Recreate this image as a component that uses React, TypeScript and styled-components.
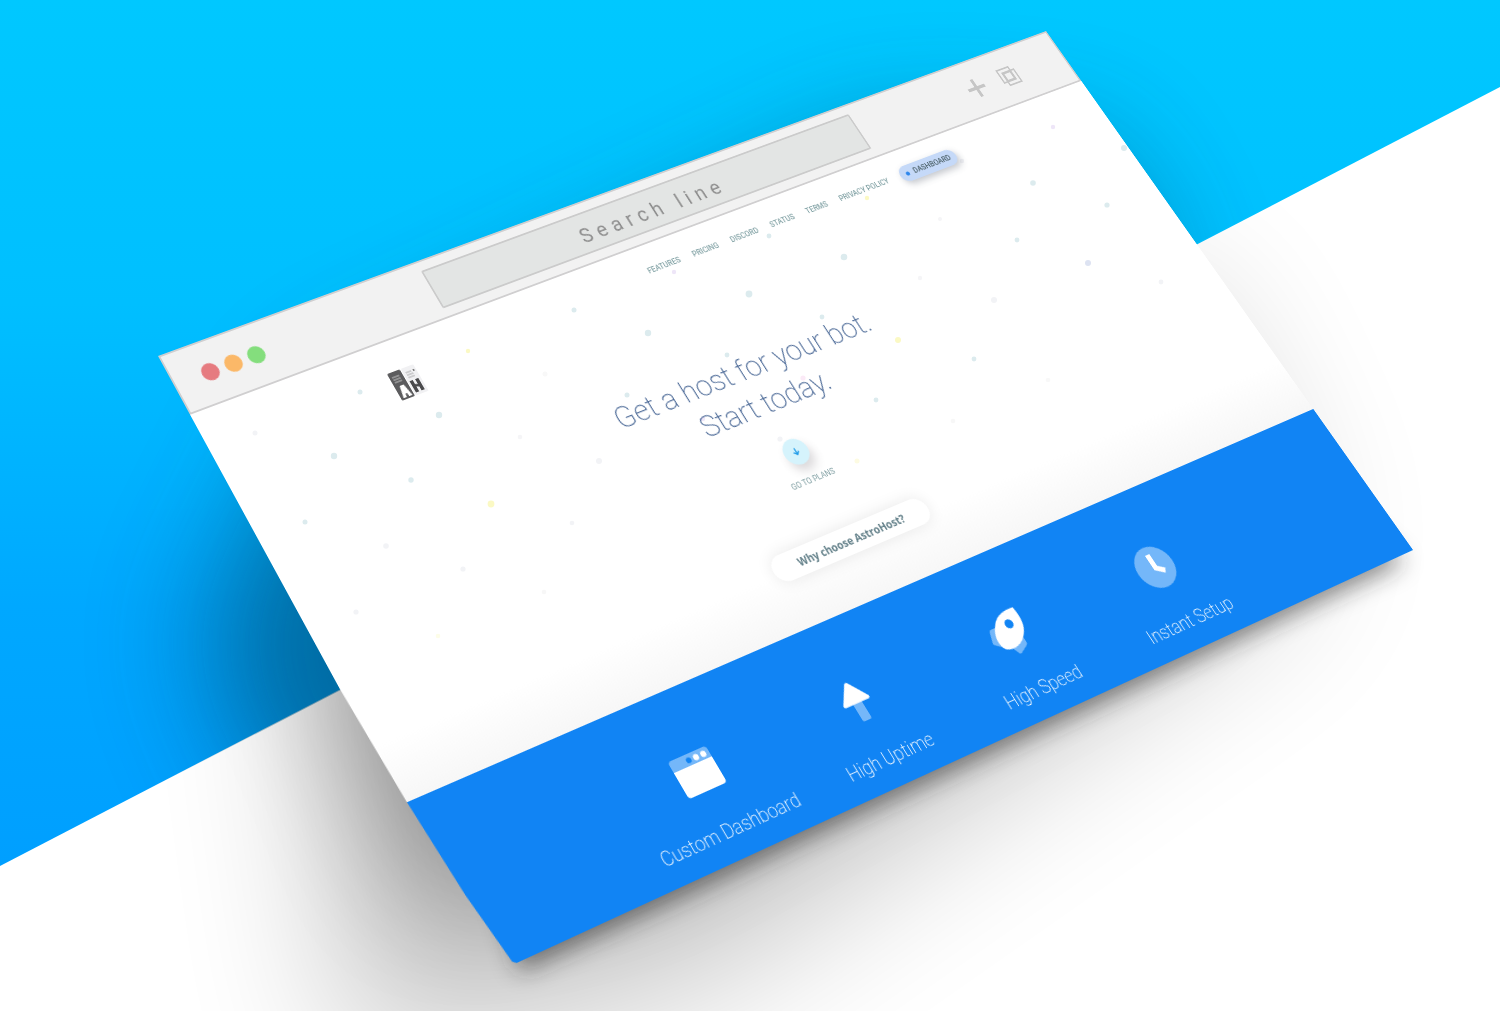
import React, { useLayoutEffect, useRef, useState } from "react";
import styled, { createGlobalStyle } from "styled-components";

const PAGE_W = 1200;
const PAGE_H = 700;

/* Corners of the tilted window, as shares of the scene (clockwise from top left). */
const CORNERS: [number, number][] = [
  [158 / 1500, 356 / 1011],
  [1046 / 1500, 31 / 1011],
  [1413 / 1500, 550 / 1011],
  [495 / 1500, 973 / 1011],
];

function tilt(width: number, height: number) {
  const [p0, p1, p2, p3] = CORNERS.map(([x, y]) => [x * width, y * height]);
  const dx1 = p1[0] - p2[0];
  const dx2 = p3[0] - p2[0];
  const dx3 = p0[0] - p1[0] + p2[0] - p3[0];
  const dy1 = p1[1] - p2[1];
  const dy2 = p3[1] - p2[1];
  const dy3 = p0[1] - p1[1] + p2[1] - p3[1];
  const den = dx1 * dy2 - dx2 * dy1;
  const g = (dx3 * dy2 - dx2 * dy3) / den;
  const h = (dx1 * dy3 - dx3 * dy1) / den;
  const a = p1[0] - p0[0] + g * p1[0];
  const b = p3[0] - p0[0] + h * p3[0];
  const d = p1[1] - p0[1] + g * p1[1];
  const e = p3[1] - p0[1] + h * p3[1];
  const m = [
    a / PAGE_W, d / PAGE_W, 0, g / PAGE_W,
    b / PAGE_H, e / PAGE_H, 0, h / PAGE_H,
    0, 0, 1, 0,
    p0[0], p0[1], 0, 1,
  ];
  return `matrix3d(${m.join(",")})`;
}

const GlobalStyle = createGlobalStyle`
  *, *::before, *::after { box-sizing: border-box; }
  body { margin: 0; font-family: Roboto, "Liberation Sans", sans-serif; }
`;

const Scene = styled.main`
  position: relative;
  min-height: 100vh;
  overflow: hidden;
  background: #fff;
`;

const Layer = styled.svg`
  position: absolute;
  inset: 0;
  width: 100%;
  height: 100%;
  pointer-events: none;
`;

const ConfettiLayer = styled(Layer)`
  mix-blend-mode: multiply;
`;

const BrowserWindow = styled.section`
  position: absolute;
  top: 0;
  left: 0;
  display: flex;
  flex-direction: column;
  width: ${PAGE_W}px;
  height: ${PAGE_H}px;
  transform-origin: 0 0;
  background: #fff;
  clip-path: polygon(0 0, 100% 0, 100% 100%, 2.1% 100%, 1.8% 99.6%, 1% 89%, 0.4% 74%, 0 56%);
`;

const Toolbar = styled.div`
  display: grid;
  grid-template-columns: 1fr 580px 1fr;
  align-items: center;
  height: 72px;
  padding: 0 12px 0 32px;
  background: #f2f2f2;
  border: 2px solid #d0cfd0;
`;

const Lights = styled.div`
  display: flex;
  gap: 8px;
`;

const Light = styled.button<{ $color: string }>`
  width: 20px;
  height: 20px;
  padding: 0;
  border: 0;
  border-radius: 50%;
  background: ${(p) => p.$color};
`;

const SearchBox = styled.input`
  height: 48px;
  padding: 6px 0 0;
  border: 2px solid #cbcbcb;
  border-radius: 2px;
  background: #e3e5e4;
  color: #8f8f8f;
  font: 400 24px Roboto, "Liberation Sans", sans-serif;
  letter-spacing: 7px;
  text-align: center;
  &::placeholder { color: #8f8f8f; opacity: 1; }
`;

const Tools = styled.div`
  display: flex;
  justify-content: flex-end;
  gap: 24px;
  padding-right: 56px;
`;

const ToolButton = styled.button`
  display: flex;
  padding: 0;
  border: 0;
  background: none;
  color: #c6c6c6;
`;

const Hero = styled.div`
  display: flex;
  flex: 1;
  flex-direction: column;
  align-items: center;
  background: linear-gradient(#fff 86%, #f7f7f7);
`;

const Header = styled.header`
  display: flex;
  align-items: flex-start;
  justify-content: space-between;
  align-self: stretch;
  padding: 20px 208px 0 222px;
`;

const Logo = styled.a`
  display: flex;
  padding-top: 14px;
`;

const Nav = styled.nav`
  display: flex;
  align-items: center;
  gap: 17px;
  height: 20px;
`;

const NavLink = styled.a`
  color: #86a5a8;
  font-size: 9px;
  font-weight: 500;
  text-decoration: none;
`;

const DashboardButton = styled.button`
  display: flex;
  align-items: center;
  gap: 6px;
  height: 20px;
  padding: 0 8px;
  border: 0;
  border-radius: 10px;
  background: #c5d9f8;
  box-shadow: 2px 4px 8px rgba(60, 70, 90, 0.3);
  color: #4f646c;
  font: 500 9px Roboto, "Liberation Sans", sans-serif;
  &::before {
    content: "";
    width: 5px;
    height: 5px;
    border-radius: 50%;
    background: #2d86ec;
  }
`;

const Title = styled.h1`
  margin: 82px 0 0;
  color: #526f9b;
  font-size: 34px;
  font-weight: 200;
  line-height: 43px;
  text-align: center;
`;

const PlansLink = styled.a`
  display: flex;
  flex-direction: column;
  align-items: center;
  gap: 12px;
  margin-top: 24px;
  color: #7f9ea2;
  font-size: 9px;
  line-height: 14px;
  text-decoration: none;
`;

const ArrowDisc = styled.span`
  display: flex;
  align-items: center;
  justify-content: center;
  width: 30px;
  height: 30px;
  border-radius: 50%;
  background: #d5f3fc;
  box-shadow: 2px 8px 12px rgba(70, 60, 70, 0.2);
  color: #1e9be8;
`;

const WhyButton = styled.button`
  width: 204px;
  height: 30px;
  margin-top: 52px;
  border: 0;
  border-radius: 15px;
  background: #fff;
  box-shadow: 0 0 18px rgba(0, 0, 0, 0.09);
  color: #64818a;
  font: 700 12px "Open Sans", "Noto Sans", sans-serif;
`;

const Features = styled.ul`
  display: grid;
  grid-template-columns: repeat(4, 201px);
  justify-content: center;
  height: 180px;
  margin: 0;
  padding: 60px 0 0;
  background: #1184f4;
  list-style: none;
`;

const Feature = styled.li`
  display: flex;
  flex-direction: column;
  align-items: center;
  gap: 20px;
  padding-left: 4px;
  color: #fff;
  font-size: 20px;
  font-weight: 200;
  line-height: 32px;
  white-space: nowrap;
`;

const WindowIcon = () => (
  <svg width="54" height="54" viewBox="0 0 54 54" fill="#fff" aria-hidden="true">
    <path d="M7 6h39a4 4 0 0 1 4 4v8H3v-8a4 4 0 0 1 4-4z" opacity=".42" />
    <path d="M3 18h47v25a4 4 0 0 1-4 4H7a4 4 0 0 1-4-4z" />
    <circle cx="25" cy="12.500" r="3" fill="#1184f4" />
    <circle cx="34" cy="12.500" r="3.200" />
    <circle cx="43" cy="12.500" r="3.200" />
  </svg>
);

const UpIcon = () => (
  <svg width="54" height="54" viewBox="0 0 54 54" fill="#fff" aria-hidden="true">
    <rect x="21" y="24" width="11" height="24" rx="2" opacity=".42" />
    <path d="M24.500 6.500a2.500 2.500 0 0 1 4 0l14 19a2 2 0 0 1-1.700 3.200H12.200a2 2 0 0 1-1.700-3.200z" />
  </svg>
);

const RocketIcon = () => (
  <svg width="54" height="54" viewBox="0 0 54 54" fill="#fff" aria-hidden="true">
    <path d="M9 16h11l2 22-6 3L4 32q-2-1-1-3l4-11q1-2 3-2z" opacity=".42" />
    <path d="M39 30v12q0 2-2 3l-10 5q-2 1-3-1l-6-12 6-6z" opacity=".42" />
    <path d="M48 4c2 12 1 22-7 30-7 7-16 10-24 8-4-1-6-3-7-7-2-8 2-16 9-23 7-7 17-9 29-8z" />
    <circle cx="33" cy="18" r="5" fill="#1184f4" />
  </svg>
);

const ClockIcon = () => (
  <svg width="54" height="54" viewBox="0 0 54 54" fill="none" aria-hidden="true">
    <circle cx="27" cy="26" r="23.500" fill="#fff" opacity=".42" />
    <path d="M27 11v16l9 6" stroke="#fff" strokeWidth="6" />
  </svg>
);

const LogoMark = () => (
  <svg width="33" height="33" viewBox="0 0 33 33" aria-hidden="true">
    <rect width="16" height="33" rx="1.500" fill="#5c5c5e" />
    <rect x="17" width="16" height="33" rx="1.500" fill="#f1f1f3" />
    <path d="M3 6h9M3 9h9M3 12h9" stroke="#c9c9c9" strokeWidth="1" />
    <path d="M20 6h7M20 9h8M20 12h8" stroke="#a8a8aa" strokeWidth="1" />
    <circle cx="30" cy="6" r="1" fill="#555" />
    <path d="M3 31 6 17h5l3 14h-4l-.500-4h-2l-.500 4z" fill="#fff" />
    <path d="M19 16h4v5l3 1v-6h4v14h-4v-5l-3-1v6h-4z" fill="#4a4a4c" />
  </svg>
);

const FEATURES = [
  { label: "Custom Dashboard", Icon: WindowIcon },
  { label: "High Uptime", Icon: UpIcon },
  { label: "High Speed", Icon: RocketIcon },
  { label: "Instant Setup", Icon: ClockIcon },
];

const NAV = ["FEATURES", "PRICING", "DISCORD", "STATUS", "TERMS", "PRIVACY POLICY"];

const TEAL = "#dcebee";
const PALE = "#f2f3f6";
const LILAC = "#eee6f8";
const YELLOW = "#fbf9c4";

/* x, y, radius, colour of each confetti dot */
const DOTS: [number, number, number, string][] = [
  [255, 433, 2.5, PALE], [360, 392, 2.5, TEAL], [334, 456, 3.2, TEAL], [439, 415, 3.2, TEAL],
  [411, 480, 2.7, TEAL], [305, 522, 2.5, TEAL], [468, 351, 2.2, YELLOW], [574, 310, 2.5, TEAL],
  [648, 333, 3.2, TEAL], [749, 294, 3.4, TEAL], [844, 257, 3.3, TEAL], [769, 236, 2.4, TEAL],
  [674, 272, 2.2, LILAC], [867, 198, 2.2, YELLOW], [962, 161, 2.2, PALE], [1053, 127, 2.2, LILAC],
  [1124, 148, 3, TEAL], [1033, 183, 2.8, TEAL], [1107, 205, 2.6, TEAL], [1017, 240, 2.4, TEAL],
  [1088, 263, 3, "#dde3f2"], [994, 300, 3, PALE], [898, 340, 3, YELLOW], [822, 317, 2.4, TEAL],
  [727, 355, 2.4, TEAL], [627, 395, 2.5, TEAL], [974, 359, 2.4, TEAL], [876, 400, 2.4, TEAL],
  [780, 439, 2.6, PALE], [491, 504, 3.4, YELLOW], [599, 461, 3, PALE], [572, 523, 2.3, PALE],
  [463, 569, 2.6, PALE], [386, 546, 2.8, PALE], [356, 612, 2.6, PALE], [545, 374, 2.5, "#f8f8f8"],
  [520, 437, 2.3, "#f5f5f7"], [857, 461, 2.5, "#fdfbe2"], [953, 421, 2.3, "#f7f7f7"],
  [1161, 282, 2.4, PALE], [920, 278, 2.2, "#f5f5f7"], [940, 219, 2, "#f5f5f7"],
  [703, 419, 2.2, LILAC], [803, 378, 2.6, "#fbeaf7"], [438, 636, 2.3, "#fdfde8"],
  [544, 592, 2.3, "#f7f7f7"], [1048, 380, 2.3, "#f8f8f8"],
];

export default function App() {
  const sceneRef = useRef<HTMLElement>(null);
  const [size, setSize] = useState({ width: 1500, height: 1011 });

  useLayoutEffect(() => {
    const measure = () => {
      const box = sceneRef.current?.getBoundingClientRect();
      if (box) setSize({ width: box.width, height: box.height });
    };
    measure();
    window.addEventListener("resize", measure);
    return () => window.removeEventListener("resize", measure);
  }, []);

  return (
    <>
      <GlobalStyle />
      <Scene ref={sceneRef}>
        <Layer viewBox="0 0 1500 1011" preserveAspectRatio="none" aria-hidden="true">
          <defs>
            <linearGradient id="sky" x1="0" y1="0" x2="0" y2="1">
              <stop offset="0" stopColor="#00c8ff" />
              <stop offset=".35" stopColor="#00bfff" />
              <stop offset=".7" stopColor="#00a8ff" />
              <stop offset="1" stopColor="#009fff" />
            </linearGradient>
            <filter id="broad" x="-50%" y="-50%" width="200%" height="200%">
              <feGaussianBlur stdDeviation="80" />
            </filter>
            <filter id="wide" x="-40%" y="-40%" width="180%" height="180%">
              <feGaussianBlur stdDeviation="60" />
            </filter>
            <filter id="tight" x="-20%" y="-20%" width="140%" height="140%">
              <feGaussianBlur stdDeviation="12" />
            </filter>
            <clipPath id="skyClip">
              <path d="M0 0h1500v87L1197 243 341 690 0 866z" />
            </clipPath>
            <clipPath id="floorClip">
              <path d="M0 866 341 690 1197 243 1500 87v924H0z" />
            </clipPath>
          </defs>
          <path d="M0 0h1500v87L0 866z" fill="url(#sky)" />
          <g clipPath="url(#skyClip)">
            <path d="M320 400 880 140 1090 150 1170 300 560 860 280 820 200 640z" fill="#004a6c" opacity=".62" filter="url(#wide)" />
          </g>
          <g clipPath="url(#floorClip)">
            <path d="M300 620 760 420 1170 280 1300 560 700 980 360 1060z" fill="#000" opacity=".24" filter="url(#broad)" />
            <path d="M300 620 760 420 1100 400 1200 560 620 860 420 900z" fill="#000" opacity=".26" filter="url(#wide)" />
            <path d="M460 760 1260 440 1404 562 520 972z" fill="#222" opacity=".54" filter="url(#tight)" />
          </g>
        </Layer>

        <BrowserWindow style={{ transform: tilt(size.width, size.height) }}>
          <Toolbar>
            <Lights>
              <Light $color="#e67b80" aria-label="Close" />
              <Light $color="#fbb868" aria-label="Minimise" />
              <Light $color="#84de7d" aria-label="Zoom" />
            </Lights>
            <SearchBox type="text" placeholder="Search line" aria-label="Search line" />
            <Tools>
              <ToolButton aria-label="New tab">
                <svg width="24" height="24" viewBox="0 0 24 24" stroke="currentColor" strokeWidth="4">
                  <path d="M12 0v24M0 12h24" />
                </svg>
              </ToolButton>
              <ToolButton aria-label="Tabs">
                <svg width="24" height="24" viewBox="0 0 24 24" fill="none" stroke="currentColor" strokeWidth="2">
                  <path d="M1 1h17v17H1zM6 6h17v17H6zM7 7h10v10H7z" />
                </svg>
              </ToolButton>
            </Tools>
          </Toolbar>

          <Hero>
            <Header>
              <Logo href="#" aria-label="AstroHost">
                <LogoMark />
              </Logo>
              <Nav>
                {NAV.map((name) => (
                  <NavLink key={name} href="#">{name}</NavLink>
                ))}
                <DashboardButton>DASHBOARD</DashboardButton>
              </Nav>
            </Header>
            <Title>
              Get a host for your bot.
              <br />
              Start today.
            </Title>
            <PlansLink href="#">
              <ArrowDisc>
                <svg width="10" height="10" viewBox="0 0 12 12" fill="none" stroke="currentColor" strokeWidth="1.800">
                  <path d="M6 1v9M2 6l4 4 4-4" />
                </svg>
              </ArrowDisc>
              GO TO PLANS
            </PlansLink>
            <WhyButton>Why choose AstroHost?</WhyButton>
          </Hero>

          <Features>
            {FEATURES.map(({ label, Icon }) => (
              <Feature key={label}>
                <Icon />
                {label}
              </Feature>
            ))}
          </Features>
        </BrowserWindow>

        <ConfettiLayer viewBox="0 0 1500 1011" preserveAspectRatio="none" aria-hidden="true">
          {DOTS.map(([x, y, r, color]) => (
            <circle key={`${x}-${y}`} cx={x} cy={y} r={r} fill={color} />
          ))}
        </ConfettiLayer>
      </Scene>
    </>
  );
}
